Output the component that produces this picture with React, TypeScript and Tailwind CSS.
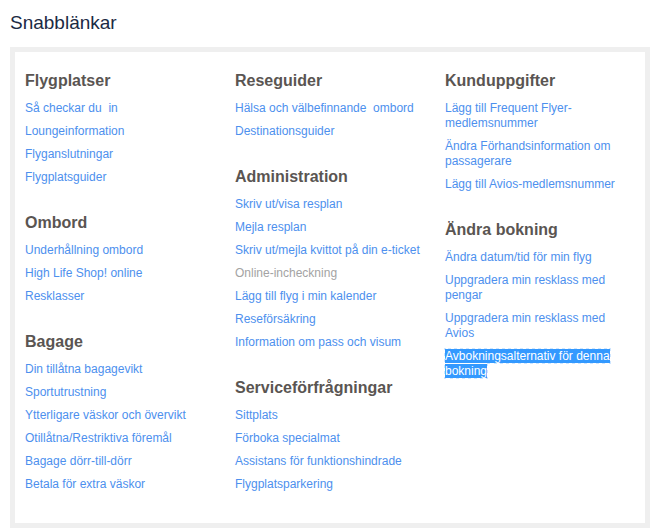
import React from "react";

type LinkItem = { label: string; disabled?: boolean; focused?: boolean };
type Section = { title: string; links: LinkItem[] };

const columns: Section[][] = [
  [
    {
      title: "Flygplatser",
      links: [
        { label: "Så checkar du\u00a0 in" },
        { label: "Loungeinformation" },
        { label: "Flyganslutningar" },
        { label: "Flygplatsguider" },
      ],
    },
    {
      title: "Ombord",
      links: [
        { label: "Underhållning ombord" },
        { label: "High Life Shop! online" },
        { label: "Resklasser" },
      ],
    },
    {
      title: "Bagage",
      links: [
        { label: "Din tillåtna bagagevikt" },
        { label: "Sportutrustning" },
        { label: "Ytterligare väskor och övervikt" },
        { label: "Otillåtna/Restriktiva föremål" },
        { label: "Bagage dörr-till-dörr" },
        { label: "Betala för extra väskor" },
      ],
    },
  ],
  [
    {
      title: "Reseguider",
      links: [
        { label: "Hälsa och välbefinnande\u00a0 ombord" },
        { label: "Destinationsguider" },
      ],
    },
    {
      title: "Administration",
      links: [
        { label: "Skriv ut/visa resplan" },
        { label: "Mejla resplan" },
        { label: "Skriv ut/mejla kvittot på din e-ticket" },
        { label: "Online-incheckning", disabled: true },
        { label: "Lägg till flyg i min kalender" },
        { label: "Reseförsäkring" },
        { label: "Information om pass och visum" },
      ],
    },
    {
      title: "Serviceförfrågningar",
      links: [
        { label: "Sittplats" },
        { label: "Förboka specialmat" },
        { label: "Assistans för funktionshindrade" },
        { label: "Flygplatsparkering" },
      ],
    },
  ],
  [
    {
      title: "Kunduppgifter",
      links: [
        { label: "Lägg till Frequent Flyer-medlemsnummer" },
        { label: "Ändra Förhandsinformation om passagerare" },
        { label: "Lägg till Avios-medlemsnummer" },
      ],
    },
    {
      title: "Ändra bokning",
      links: [
        { label: "Ändra datum/tid för min flyg" },
        { label: "Uppgradera min resklass med pengar" },
        { label: "Uppgradera min resklass med Avios" },
        { label: "Avbokningsalternativ för denna bokning", focused: true },
      ],
    },
  ],
];

function QuickLink({ item }: { item: LinkItem }) {
  if (item.disabled) {
    return <li className="mt-2 first:mt-[10px] text-[#a3a3a3]">{item.label}</li>;
  }
  return (
    <li className="mt-2 first:mt-[10px]">
      {item.focused ? (
        <a href="#" className="bg-[#3399ff] text-white outline-1 outline-dotted outline-[#cfe6ff]">
          {item.label}
        </a>
      ) : (
        <a href="#" className="text-[#4d90ee]">
          {item.label}
        </a>
      )}
    </li>
  );
}

export default function App() {
  return (
    <div className="w-[655px] h-[531px] bg-white px-[10px] font-['Liberation_Sans',Arial,sans-serif]">
      <h2 className="pt-[12px] text-[19px] leading-[22px] text-[#1b2a44]">Snabblänkar</h2>
      <div className="mt-[13px] w-[640px] border-[5px] border-[#efefef] px-[10px] pt-[19px] pb-[31px]">
        <div className="flex">
          {columns.map((sections, ci) => (
            <div key={ci} className={ci < 2 ? "w-[210px] shrink-0" : "w-[190px] shrink-0"}>
              {sections.map((s) => (
                <div key={s.title} className="mb-[28px] last:mb-0">
                  <h3 className="text-[16px] leading-[20px] font-bold text-[#5a5552]">{s.title}</h3>
                  <ul className="text-[12px] leading-[15px]">
                    {s.links.map((l) => (
                      <QuickLink key={l.label} item={l} />
                    ))}
                  </ul>
                </div>
              ))}
            </div>
          ))}
        </div>
      </div>
    </div>
  );
}
